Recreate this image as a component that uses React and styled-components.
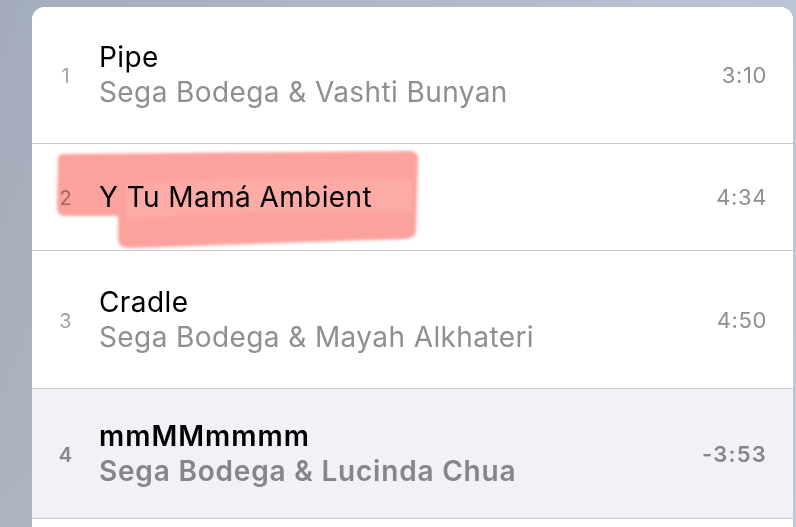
import styled, { createGlobalStyle } from "styled-components";

const GlobalStyle = createGlobalStyle`
  html, body {
    margin: 0;
    padding: 0;
    height: 100%;
  }
  body {
    font-family: Inter, "Noto Sans", "Liberation Sans", sans-serif;
    background: linear-gradient(160deg, #a3acba 0%, #aab2bf 55%, #b6bdc7 100%);
    overflow: hidden;
  }
`;

const Backdrop = styled.div`
  height: 527px;
  padding: 7px 3px 0 32px;
  box-sizing: border-box;
  background: linear-gradient(90deg, rgba(255, 255, 255, 0) 0%, rgba(200, 210, 228, 0.6) 100%);
`;

const Card = styled.div`
  position: relative;
  height: 100%;
  background: #fff;
  border-radius: 13px 13px 0 0;
  overflow: hidden;
`;

const Row = styled.div`
  height: ${(p) => p.$h}px;
  display: flex;
  align-items: center;
  padding: 0 26px 0 0;
  border-bottom: 1px solid #c9c8cd;
  background: ${(p) => (p.$active ? "#f2f1f6" : "#fff")};
  font-weight: ${(p) => (p.$active ? 600 : 400)};
`;

const Num = styled.div`
  width: 67px;
  flex: none;
  text-align: center;
  font-size: 20px;
  color: ${(p) => (p.$active ? "#86868b" : "#a1a1a5")};
  padding-top: 2px;
`;

const Info = styled.div`
  flex: 1;
  display: flex;
  flex-direction: column;
  line-height: 35px;
`;

const Title = styled.div`
  font-size: 28px;
  color: #000;
  letter-spacing: ${(p) => (p.$active ? "1px" : "0.4px")};
`;

const Artist = styled.div`
  font-size: 28px;
  color: ${(p) => (p.$active ? "#85858a" : "#8e8e93")};
  letter-spacing: ${(p) => (p.$active ? "0.8px" : "0.4px")};
`;

const Time = styled.div`
  font-size: 22px;
  color: ${(p) => (p.$active ? "#85858a" : "#8e8e93")};
  letter-spacing: ${(p) => (p.$active ? "1.2px" : "0.6px")};
`;

const Marker = styled.svg`
  position: absolute;
  left: 0;
  top: 0;
  mix-blend-mode: multiply;
  pointer-events: none;
`;

const tracks = [
  { n: 1, title: "Pipe", artist: "Sega Bodega & Vashti Bunyan", time: "3:10", h: 136 },
  { n: 2, title: "Y Tu Mamá Ambient", time: "4:34", h: 106 },
  { n: 3, title: "Cradle", artist: "Sega Bodega & Mayah Alkhateri", time: "4:50", h: 137 },
  { n: 4, title: "mmMMmmmm", artist: "Sega Bodega & Lucinda Chua", time: "-3:53", h: 129, active: true },
];

export default function App() {
  return (
    <>
      <GlobalStyle />
      <Backdrop>
        <Card>
          {tracks.map((t) => (
            <Row key={t.n} $h={t.h} $active={t.active}>
              <Num $active={t.active}>{t.n}</Num>
              <Info>
                <Title $active={t.active}>{t.title}</Title>
                {t.artist && <Artist $active={t.active}>{t.artist}</Artist>}
              </Info>
              <Time $active={t.active}>{t.time}</Time>
            </Row>
          ))}
          <Marker width="420" height="260" viewBox="0 0 420 260">
            <defs>
              <filter id="soft">
                <feGaussianBlur stdDeviation="1.4" />
              </filter>
            </defs>
            <path
              filter="url(#soft)"
              fill="#fca29e"
              d="M26,152 Q25,147 33,147 L378,144 Q386,144 386,152 L384,224 Q382,232 373,232 L98,241 Q86,241 86,232 L86,209 L33,209 Q25,209 25,201 Z"
            />
            <path
              filter="url(#soft)"
              fill="#fdbcb8"
              opacity="0.35"
              d="M95,178 Q200,168 380,172 L380,205 Q250,200 95,212 Z"
            />
          </Marker>
        </Card>
      </Backdrop>
    </>
  );
}
